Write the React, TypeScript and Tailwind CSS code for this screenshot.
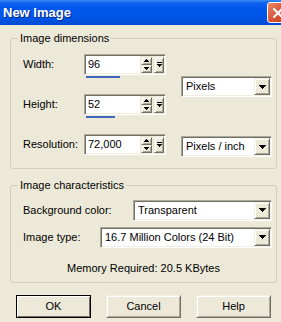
import React from "react";

function Tri({ dir = "down", size = 7 }: { dir?: "down" | "up"; size?: number }) {
  const rows = Math.ceil(size / 2);
  const rects = [];
  for (let i = 0; i < rows; i++) {
    const w = size - i * 2;
    const y = dir === "down" ? i : rows - 1 - i;
    rects.push(<rect key={i} x={i} y={y} width={w} height={1} />);
  }
  return (
    <svg width={size} height={rows} viewBox={`0 0 ${size} ${rows}`} shapeRendering="crispEdges" fill="#000">
      {rects}
    </svg>
  );
}

function BarTri() {
  return (
    <svg width="5" height="6" viewBox="0 0 5 6" shapeRendering="crispEdges" fill="#000">
      <rect x="0" y="0" width="5" height="1" />
      <rect x="0" y="2" width="5" height="1" />
      <rect x="1" y="3" width="3" height="1" />
      <rect x="2" y="4" width="1" height="1" />
    </svg>
  );
}

const raised =
  "bg-[#ece9d8] border border-t-[#f1efe2] border-l-[#f1efe2] border-b-[#716f64] border-r-[#716f64] shadow-[inset_1px_1px_0_#ffffff,inset_-1px_-1px_0_#aca899]";

const sunken =
  "border border-t-[#aca899] border-l-[#aca899] border-b-[#ffffff] border-r-[#ffffff] shadow-[inset_1px_1px_0_#716f64,inset_-1px_-1px_0_#f1efe2]";

function Combo({ value, width }: { value: string; width: string }) {
  return (
    <div className={`${sunken} ${width} h-[21px] bg-white flex items-stretch p-[1px]`}>
      <div className="flex-1 flex items-center pl-[3px] whitespace-nowrap">{value}</div>
      <div className={`${raised} w-[16px] flex items-center justify-center`}>
        <Tri dir="down" size={7} />
      </div>
    </div>
  );
}

function Spin({ value, bar }: { value: string; bar?: string }) {
  return (
    <div className="flex flex-col">
      <div className={`${sunken} w-[82px] h-[21px] flex items-stretch p-[1px] bg-[#ece9d8]`}>
        <div className="w-[54px] bg-white flex items-center pl-[2px]">{value}</div>
        <div className="flex items-center pl-[1px] gap-[2px]">
          <div className="flex flex-col">
            <div className={`${raised} w-[11px] h-[8px] flex items-center justify-center`}>
              <Tri dir="up" size={5} />
            </div>
            <div className={`${raised} w-[11px] h-[8px] flex items-center justify-center`}>
              <Tri dir="down" size={5} />
            </div>
          </div>
          <div className={`${raised} w-[10px] h-[16px] flex items-center justify-center`}>
            <BarTri />
          </div>
        </div>
      </div>
      {bar ? <div className={`ml-[2px] mt-[1px] h-[2px] ${bar} bg-[#3d68bd]`} /> : null}
    </div>
  );
}

function Button({ label, isDefault }: { label: string; isDefault?: boolean }) {
  return (
    <div
      className={
        isDefault
          ? "w-[75px] h-[23px] bg-[#ece9d8] border border-[#000000] shadow-[inset_1px_1px_0_#ffffff,inset_-1px_-1px_0_#716f64] flex items-center justify-center"
          : `w-[75px] h-[23px] ${raised} flex items-center justify-center`
      }
    >
      {label}
    </div>
  );
}

export default function App() {
  return (
    <div className="w-[281px] h-[322px] overflow-hidden bg-[#ece9d8] font-['Liberation_Sans',Arial,sans-serif] text-[11px] leading-[13px] text-black">
      {/* Title bar */}
      <div className="h-[25px] flex items-center justify-between overflow-hidden bg-[linear-gradient(to_bottom,#3b8cf6_0px,#0f62f0_3px,#0058ee_8px,#0055e6_18px,#004bd2_25px)]">
        <span className="pl-[3px] text-white font-bold text-[13px] leading-[15px] [text-shadow:1px_1px_0_#0a2a8c]">
          New Image
        </span>
        <div className="-mr-[8px] w-[22px] h-[21px] rounded-[3px] border border-white bg-[linear-gradient(135deg,#ea8b6b_0%,#d9553a_50%,#c2401e_100%)] flex items-center justify-center">
          <svg width="10" height="10" viewBox="0 0 10 10">
            <path d="M1 1L9 9M9 1L1 9" stroke="#ffffff" strokeWidth="2" strokeLinecap="square" />
          </svg>
        </div>
      </div>

      <div className="px-[10px] pt-[7px]">
        {/* Group 1 */}
        <fieldset className="w-[267px] h-[137px] border border-[#d0d0bf] rounded-[3px]">
          <legend className="ml-[7px] px-[2px]">Image dimensions</legend>
          <div className="flex pl-[12px] pt-[9px]">
            <div className="flex flex-col">
              {[
                { l: "Width:", v: "96", b: "w-[34px]" },
                { l: "Height:", v: "52", b: "w-[29px]" },
                { l: "Resolution:", v: "72,000" },
              ].map((r) => (
                <div key={r.l} className="flex h-[40px]">
                  <div className="w-[61px] h-[21px] flex items-center">{r.l}</div>
                  <Spin value={r.v} bar={r.b} />
                </div>
              ))}
            </div>
            <div className="ml-[15px] pt-[22px] flex flex-col gap-[39px]">
              <Combo value="Pixels" width="w-[91px]" />
              <Combo value="Pixels / inch" width="w-[91px]" />
            </div>
          </div>
        </fieldset>

        {/* Group 2 */}
        <fieldset className="mt-[10px] w-[267px] h-[104px] border border-[#d0d0bf] rounded-[3px]">
          <legend className="ml-[7px] px-[2px]">Image characteristics</legend>
          <div className="pl-[12px] pr-[4px] pt-[8px] flex flex-col">
            <div className="flex items-center justify-between h-[20px]">
              <span>Background color:</span>
              <Combo value="Transparent" width="w-[139px]" />
            </div>
            <div className="flex items-center justify-between h-[20px] mt-[7px]">
              <span>Image type:</span>
              <Combo value="16.7 Million Colors (24 Bit)" width="w-[172px]" />
            </div>
            <div className="mt-[15px] text-center pr-[8px]">Memory Required: 20.5 KBytes</div>
          </div>
        </fieldset>

        {/* Buttons */}
        <div className="mt-[12px] pl-[6px] flex gap-[15px]">
          <Button label="OK" isDefault />
          <Button label="Cancel" />
          <Button label="Help" />
        </div>
      </div>
    </div>
  );
}
